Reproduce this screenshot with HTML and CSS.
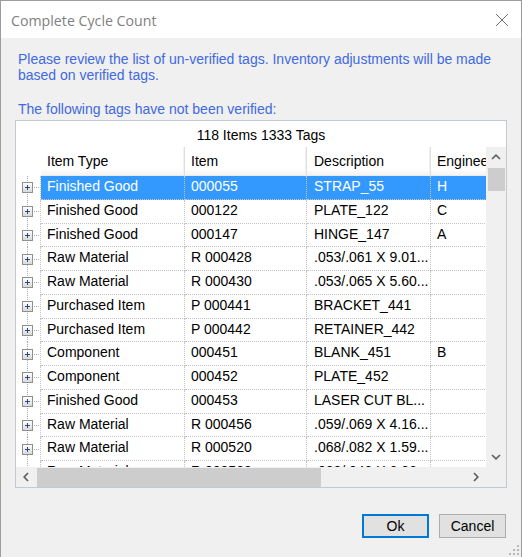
FILE: index.html
```html
<!DOCTYPE html>
<html>
<head>
<meta charset="utf-8">
<title>Complete Cycle Count</title>
<link rel="stylesheet" href="styles.css">
</head>
<body>
<div class="window">
  <div class="titlebar">
    <span class="title">Complete Cycle Count</span>
    <svg class="close" width="14" height="14" viewBox="0 0 14 14"><path d="M1 1L13 13M13 1L1 13" stroke="#707070" stroke-width="1" fill="none"/></svg>
  </div>
  <div class="content">
    <p class="msg">Please review the list of un-verified tags. Inventory adjustments will be made<br>based on verified tags.</p>
    <p class="msg msg2">The following tags have not been verified:</p>
    <div class="grid">
      <div class="caption">118 Items 1333 Tags</div>
      <div class="grid-main">
        <div class="view">
          <div class="row head">
            <div class="tree-h"></div>
            <div class="c type">Item Type</div>
            <div class="c item">Item</div>
            <div class="c desc">Description</div>
            <div class="c eng">Engineer</div>
          </div>
          <div class="row sel">
            <div class="tree"><span class="exp"><svg width="9" height="9" viewBox="0 0 9 9"><path d="M2 4.5h5M4.5 2v5" stroke="#2b4a7c"/></svg></span></div>
            <div class="c type">Finished Good</div><div class="c item">000055</div><div class="c desc">STRAP_55</div><div class="c eng">H</div>
          </div>
          <div class="row">
            <div class="tree"><span class="exp"><svg width="9" height="9" viewBox="0 0 9 9"><path d="M2 4.5h5M4.5 2v5" stroke="#2b4a7c"/></svg></span></div>
            <div class="c type">Finished Good</div><div class="c item">000122</div><div class="c desc">PLATE_122</div><div class="c eng">C</div>
          </div>
          <div class="row">
            <div class="tree"><span class="exp"><svg width="9" height="9" viewBox="0 0 9 9"><path d="M2 4.5h5M4.5 2v5" stroke="#2b4a7c"/></svg></span></div>
            <div class="c type">Finished Good</div><div class="c item">000147</div><div class="c desc">HINGE_147</div><div class="c eng">A</div>
          </div>
          <div class="row">
            <div class="tree"><span class="exp"><svg width="9" height="9" viewBox="0 0 9 9"><path d="M2 4.5h5M4.5 2v5" stroke="#2b4a7c"/></svg></span></div>
            <div class="c type">Raw Material</div><div class="c item">R 000428</div><div class="c desc">.053/.061 X 9.01...</div><div class="c eng"></div>
          </div>
          <div class="row">
            <div class="tree"><span class="exp"><svg width="9" height="9" viewBox="0 0 9 9"><path d="M2 4.5h5M4.5 2v5" stroke="#2b4a7c"/></svg></span></div>
            <div class="c type">Raw Material</div><div class="c item">R 000430</div><div class="c desc">.053/.065 X 5.60...</div><div class="c eng"></div>
          </div>
          <div class="row">
            <div class="tree"><span class="exp"><svg width="9" height="9" viewBox="0 0 9 9"><path d="M2 4.5h5M4.5 2v5" stroke="#2b4a7c"/></svg></span></div>
            <div class="c type">Purchased Item</div><div class="c item">P 000441</div><div class="c desc">BRACKET_441</div><div class="c eng"></div>
          </div>
          <div class="row">
            <div class="tree"><span class="exp"><svg width="9" height="9" viewBox="0 0 9 9"><path d="M2 4.5h5M4.5 2v5" stroke="#2b4a7c"/></svg></span></div>
            <div class="c type">Purchased Item</div><div class="c item">P 000442</div><div class="c desc">RETAINER_442</div><div class="c eng"></div>
          </div>
          <div class="row">
            <div class="tree"><span class="exp"><svg width="9" height="9" viewBox="0 0 9 9"><path d="M2 4.5h5M4.5 2v5" stroke="#2b4a7c"/></svg></span></div>
            <div class="c type">Component</div><div class="c item">000451</div><div class="c desc">BLANK_451</div><div class="c eng">B</div>
          </div>
          <div class="row">
            <div class="tree"><span class="exp"><svg width="9" height="9" viewBox="0 0 9 9"><path d="M2 4.5h5M4.5 2v5" stroke="#2b4a7c"/></svg></span></div>
            <div class="c type">Component</div><div class="c item">000452</div><div class="c desc">PLATE_452</div><div class="c eng"></div>
          </div>
          <div class="row">
            <div class="tree"><span class="exp"><svg width="9" height="9" viewBox="0 0 9 9"><path d="M2 4.5h5M4.5 2v5" stroke="#2b4a7c"/></svg></span></div>
            <div class="c type">Finished Good</div><div class="c item">000453</div><div class="c desc">LASER CUT BL...</div><div class="c eng"></div>
          </div>
          <div class="row">
            <div class="tree"><span class="exp"><svg width="9" height="9" viewBox="0 0 9 9"><path d="M2 4.5h5M4.5 2v5" stroke="#2b4a7c"/></svg></span></div>
            <div class="c type">Raw Material</div><div class="c item">R 000456</div><div class="c desc">.059/.069 X 4.16...</div><div class="c eng"></div>
          </div>
          <div class="row">
            <div class="tree"><span class="exp"><svg width="9" height="9" viewBox="0 0 9 9"><path d="M2 4.5h5M4.5 2v5" stroke="#2b4a7c"/></svg></span></div>
            <div class="c type">Raw Material</div><div class="c item">R 000520</div><div class="c desc">.068/.082 X 1.59...</div><div class="c eng"></div>
          </div>
          <div class="row">
            <div class="tree"><span class="exp"><svg width="9" height="9" viewBox="0 0 9 9"><path d="M2 4.5h5M4.5 2v5" stroke="#2b4a7c"/></svg></span></div>
            <div class="c type">Raw Material</div><div class="c item">R 000523</div><div class="c desc">.028/.042 X 6.06...</div><div class="c eng"></div>
          </div>
        </div>
        <div class="vscroll">
          <div class="arrow"><svg width="10" height="6" viewBox="0 0 10 6"><path d="M1 5L5 1.2L9 5" fill="none" stroke="#606060" stroke-width="1.7"/></svg></div>
          <div class="vthumb"></div>
          <div class="track"></div>
          <div class="arrow"><svg width="10" height="6" viewBox="0 0 10 6"><path d="M1 1L5 4.8L9 1" fill="none" stroke="#606060" stroke-width="1.7"/></svg></div>
        </div>
      </div>
      <div class="hbar">
        <div class="hscroll">
          <div class="arrow"><svg width="6" height="10" viewBox="0 0 6 10"><path d="M5 1L1.2 5L5 9" fill="none" stroke="#606060" stroke-width="1.7"/></svg></div>
          <div class="hthumb"></div>
          <div class="track"></div>
          <div class="arrow"><svg width="6" height="10" viewBox="0 0 6 10"><path d="M1 1L4.8 5L1 9" fill="none" stroke="#606060" stroke-width="1.7"/></svg></div>
        </div>
        <div class="corner"></div>
      </div>
    </div>
    <div class="buttons">
      <button class="btn default">Ok</button>
      <button class="btn">Cancel</button>
    </div>
  </div>
  <svg class="grip" width="12" height="12" viewBox="0 0 12 12">
    <rect x="9" y="1" width="2" height="2" fill="#b8b8b8"/>
    <rect x="5" y="5" width="2" height="2" fill="#b8b8b8"/>
    <rect x="9" y="5" width="2" height="2" fill="#b8b8b8"/>
    <rect x="1" y="9" width="2" height="2" fill="#b8b8b8"/>
    <rect x="5" y="9" width="2" height="2" fill="#b8b8b8"/>
    <rect x="9" y="9" width="2" height="2" fill="#b8b8b8"/>
  </svg>
</div>
</body>
</html>
```
FILE: styles.css
```css
html, body {
  margin: 0;
  padding: 0;
  background: #f0f0f0;
}
.window {
  position: relative;
  width: 522px;
  height: 557px;
  box-sizing: border-box;
  border: 1px solid #9c9c9c;
  border-bottom: none;
  background: #f0f0f0;
  display: flex;
  flex-direction: column;
  font-family: "Liberation Sans", Arial, sans-serif;
  font-size: 14px;
  color: #000;
}
.titlebar {
  height: 37px;
  flex: none;
  background: #fff;
  display: flex;
  align-items: center;
  justify-content: space-between;
  padding: 0 12px 0 10px;
}
.title {
  font-family: "Open Sans", "Noto Sans", sans-serif;
  font-size: 14.2px;
  color: #7f7f7f;
  padding-top: 1px;
}
.close {
  display: block;
  margin-top: 1px;
}
.content {
  flex: 1;
  display: flex;
  flex-direction: column;
  padding: 13px 14px 0 14px;
}
.msg {
  margin: 0;
  padding-left: 3px;
  font-size: 14px;
  line-height: 16px;
  color: #4169e1;
  white-space: nowrap;
}
.msg2 {
  margin-top: 18px;
}
.grid {
  margin-top: 3px;
  width: 492px;
  height: 368px;
  box-sizing: border-box;
  border: 1px solid #c3cad3;
  background: #fff;
  display: flex;
  flex-direction: column;
}
.caption {
  height: 26px;
  flex: none;
  line-height: 28px;
  text-align: center;
  overflow: hidden;
}
.grid-main {
  height: 320px;
  flex: none;
  display: flex;
}
.view {
  flex: 1;
  overflow: hidden;
  background: #fff;
}
.row {
  display: flex;
  height: 23.75px;
}
.row.head {
  height: 29px;
}
.tree-h {
  width: 25px;
  flex: none;
}
.tree {
  width: 25px;
  flex: none;
  box-sizing: border-box;
  border-right: 1px dotted #c4c4c4;
  display: flex;
  align-items: center;
  padding-left: 6px;
  background-image:
    repeating-linear-gradient(180deg, #a9a9a9 0 1px, transparent 1px 2px),
    repeating-linear-gradient(90deg, #a9a9a9 0 1px, transparent 1px 2px);
  background-size: 1px 100%, 8px 1px;
  background-position: 11px 0, 16px 50%;
  background-repeat: no-repeat;
}
.exp {
  width: 11px;
  height: 11px;
  box-sizing: border-box;
  border: 1px solid #8f8f8f;
  background: linear-gradient(#ffffff, #d9d9d9);
  display: flex;
}
.exp svg {
  display: block;
}
.c {
  flex: none;
  box-sizing: border-box;
  padding-left: 6px;
  white-space: nowrap;
  overflow: hidden;
  line-height: 20px;
  border-right: 1px dotted #c4c4c4;
  border-bottom: 1px dotted #c4c4c4;
}
.type { width: 144px; }
.item { width: 122px; }
.desc { width: 124px; padding-left: 7px; }
.eng { width: 80px; }
.head .c {
  line-height: 29px;
  border-right: 1px solid #dedede;
  border-bottom: 1px solid #ececec;
  background: linear-gradient(180deg, #ffffff 0, #ffffff 75%, #f4f4f4 100%);
  box-shadow: inset -1px 0 0 #f2f2f2;
}
.sel .c {
  background: #3399ff;
  color: #fff;
}
.vscroll {
  width: 20px;
  flex: none;
  background: #f0f0f0;
  display: flex;
  flex-direction: column;
}
.arrow {
  width: 20px;
  height: 20px;
  flex: none;
  display: flex;
  align-items: center;
  justify-content: center;
}
.vthumb {
  height: 23px;
  margin: 1px 1px 0 2px;
  background: #cdcdcd;
  flex: none;
}
.track {
  flex: 1;
}
.hbar {
  height: 20px;
  flex: none;
  display: flex;
}
.hscroll {
  flex: 1;
  display: flex;
  background: #f0f0f0;
}
.hthumb {
  width: 284px;
  height: 19px;
  margin: 1px 0 0 1px;
  background: #cdcdcd;
  flex: none;
}
.corner {
  width: 20px;
  flex: none;
  background: #f0f0f0;
}
.buttons {
  margin-top: 26px;
  display: flex;
  justify-content: flex-end;
  gap: 10px;
  padding-right: 1px;
}
.btn {
  width: 67px;
  height: 24px;
  box-sizing: border-box;
  margin: 0;
  padding: 0;
  font-family: "Liberation Sans", Arial, sans-serif;
  font-size: 14px;
  color: #000;
  background: #e1e1e1;
  border: 1px solid #adadad;
}
.btn.default {
  border: 2px solid #0078d7;
}
.grip {
  position: absolute;
  right: 1px;
  bottom: 1px;
}
```
